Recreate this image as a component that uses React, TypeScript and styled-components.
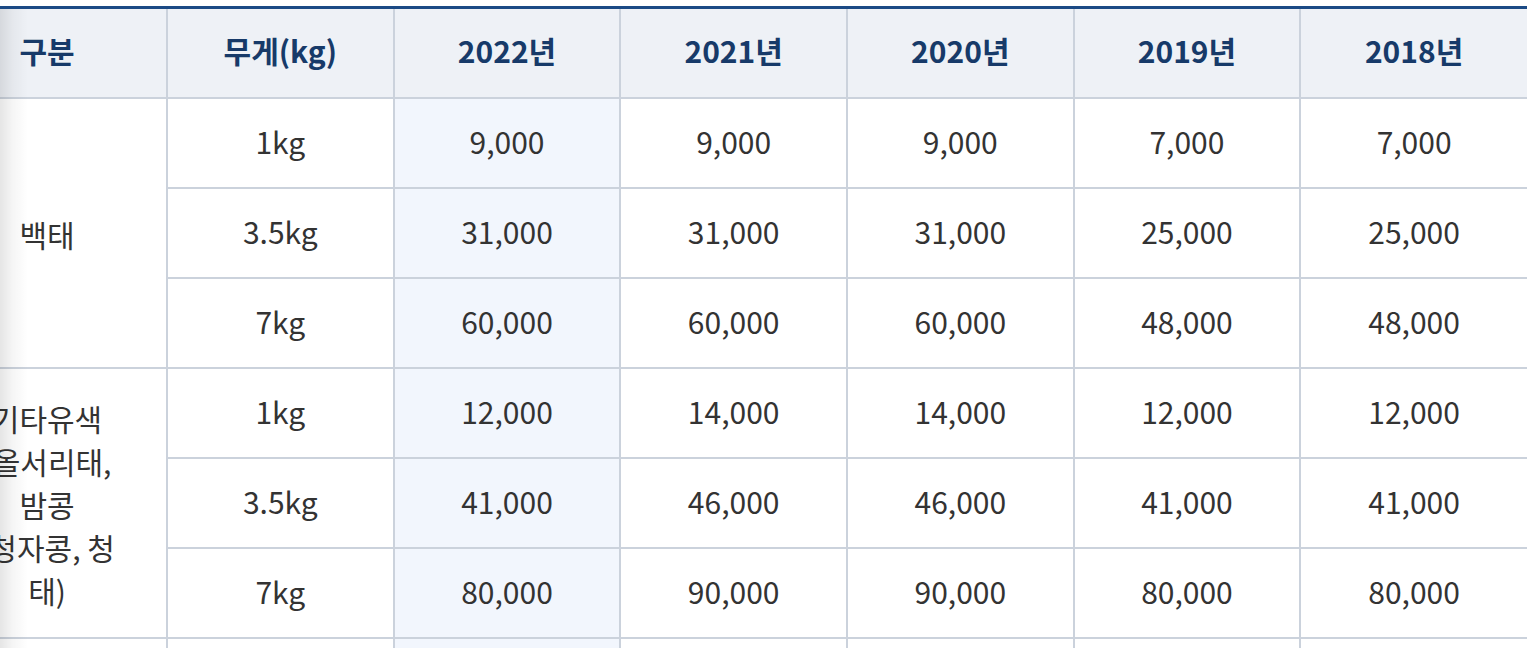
import React, { useLayoutEffect, useRef } from "react";
import styled, { createGlobalStyle } from "styled-components";

const GlobalStyle = createGlobalStyle`
  html, body { margin: 0; padding: 0; background: #ffffff; }
  body { font-family: "Noto Sans CJK KR", "Noto Sans", sans-serif; }
`;

const Page = styled.div`
  position: relative;
  padding-top: 6px;
`;

const Scroller = styled.div`
  overflow-x: auto;
  scrollbar-width: none;
  &::-webkit-scrollbar { display: none; }
`;

const Inner = styled.div`
  width: max-content;
  padding-right: 6px;
`;

const Shadow = styled.div`
  position: absolute;
  left: 0;
  top: 9px;
  bottom: 0;
  width: 28px;
  pointer-events: none;
  background: linear-gradient(to right, rgba(0, 0, 0, 0.1), rgba(0, 0, 0, 0.04) 45%, rgba(0, 0, 0, 0));
`;

const Table = styled.table`
  table-layout: fixed;
  width: 1600px;
  border-collapse: collapse;
  border-top: 3px solid #1b4a85;
`;

const Head = styled.th`
  box-sizing: border-box;
  height: 90px;
  padding: 0 0 5px;
  background: #eef1f6;
  color: #173a69;
  font-size: 30px;
  font-weight: 700;
  text-align: center;
  vertical-align: middle;
  border: 2px solid #cbd2dc;
  border-top: none;
  &:last-child { border-right: none; }
`;

const Cell = styled.td<{ $hl?: boolean }>`
  box-sizing: border-box;
  height: 90px;
  padding: 0 0 4px;
  background: ${(p) => (p.$hl ? "#f2f6fd" : "#ffffff")};
  color: #333333;
  font-size: 30px;
  font-weight: 400;
  text-align: center;
  vertical-align: middle;
  border: 2px solid #cbd2dc;
  &:last-child { border-right: none; }
`;

const GroupCell = styled(Cell)`
  padding: 4px 0 0;
  line-height: 43px;
  white-space: nowrap;
`;

const years = ["2022년", "2021년", "2020년", "2019년", "2018년"];

type Row = { weight: string; values: string[] };
type Group = { name: string[]; rows: Row[] };

const groups: Group[] = [
  {
    name: ["백태"],
    rows: [
      { weight: "1kg", values: ["9,000", "9,000", "9,000", "7,000", "7,000"] },
      { weight: "3.5kg", values: ["31,000", "31,000", "31,000", "25,000", "25,000"] },
      { weight: "7kg", values: ["60,000", "60,000", "60,000", "48,000", "48,000"] },
    ],
  },
  {
    name: ["기타유색", "(올서리태,", "밤콩", "(청자콩, 청", "태)"],
    rows: [
      { weight: "1kg", values: ["12,000", "14,000", "14,000", "12,000", "12,000"] },
      { weight: "3.5kg", values: ["41,000", "46,000", "46,000", "41,000", "41,000"] },
      { weight: "7kg", values: ["80,000", "90,000", "90,000", "80,000", "80,000"] },
    ],
  },
  {
    name: ["흑태"],
    rows: [
      { weight: "1kg", values: ["12,000", "14,000", "14,000", "12,000", "12,000"] },
      { weight: "3.5kg", values: ["41,000", "46,000", "46,000", "41,000", "41,000"] },
    ],
  },
];

export default function App() {
  const ref = useRef<HTMLDivElement>(null);
  useLayoutEffect(() => {
    if (ref.current) ref.current.scrollLeft = 74;
  }, []);
  return (
    <>
      <GlobalStyle />
      <Page>
        <Scroller ref={ref}>
          <Inner>
            <Table>
              <colgroup>
                <col style={{ width: 240 }} />
                <col style={{ width: 226.67 }} />
                {years.map((y) => (
                  <col key={y} style={{ width: 226.67 }} />
                ))}
              </colgroup>
              <thead>
                <tr>
                  <Head>구분</Head>
                  <Head>무게(kg)</Head>
                  {years.map((y) => (
                    <Head key={y}>{y}</Head>
                  ))}
                </tr>
              </thead>
              <tbody>
                {groups.map((g) =>
                  g.rows.map((r, i) => (
                    <tr key={g.name.join("") + r.weight}>
                      {i === 0 && (
                        <GroupCell rowSpan={g.rows.length}>
                          {g.name.map((line, k) => (
                            <React.Fragment key={k}>
                              {k > 0 && <br />}
                              {line}
                            </React.Fragment>
                          ))}
                        </GroupCell>
                      )}
                      <Cell>{r.weight}</Cell>
                      {r.values.map((v, j) => (
                        <Cell key={j} $hl={j === 0}>
                          {v}
                        </Cell>
                      ))}
                    </tr>
                  ))
                )}
              </tbody>
            </Table>
          </Inner>
        </Scroller>
        <Shadow />
      </Page>
    </>
  );
}
